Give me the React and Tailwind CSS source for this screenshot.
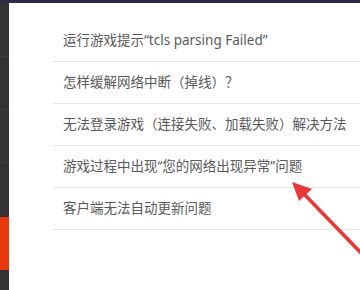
const items = [
  '运行游戏提示“tcls parsing Failed”',
  '怎样缓解网络中断（掉线）？',
  '无法登录游戏（连接失败、加载失败）解决方法',
  '游戏过程中出现“您的网络出现异常”问题',
  '客户端无法自动更新问题',
];

// red annotation arrow pointing at the 4th row
function Arrow() {
  return (
    <svg className="pointer-events-none absolute left-0 top-0" width="360" height="290" viewBox="0 0 360 290">
      <line x1="303" y1="193" x2="364" y2="256" stroke="#e8393a" strokeWidth="3.6" strokeLinecap="round" />
      <polygon points="292,182 312,189 299,201" fill="#e8393a" />
    </svg>
  );
}

export default function App() {
  return (
    <div className="relative flex h-[290px] w-[360px] flex-col overflow-hidden bg-white" style={{ fontFamily: '"Noto Sans", "Noto Sans CJK SC", sans-serif' }}>
      <div className="h-[3px] w-full bg-[#2f2947]" />
      <div className="flex flex-1">
        <div className="flex w-[9px] flex-col bg-[#333333]">
          <div className="h-[54px] border-b border-[#3d3d3d]" />
          <div className="h-[53px] border-b border-[#3d3d3d]" />
          <div className="h-[53px] border-b border-[#3d3d3d]" />
          <div className="h-[54px]" />
          <div className="h-[53px] bg-[#e8390e]" />
          <div className="flex-1" />
        </div>
        <div className="flex-1 pl-[44px] pt-[17px]">
          {items.map((t) => (
            <div key={t} className="flex h-[42px] items-center border-b border-[#e6e6e6] pl-[10px] text-[13.5px] text-[#595959]">
              {t}
            </div>
          ))}
        </div>
      </div>
      <Arrow />
    </div>
  );
}
